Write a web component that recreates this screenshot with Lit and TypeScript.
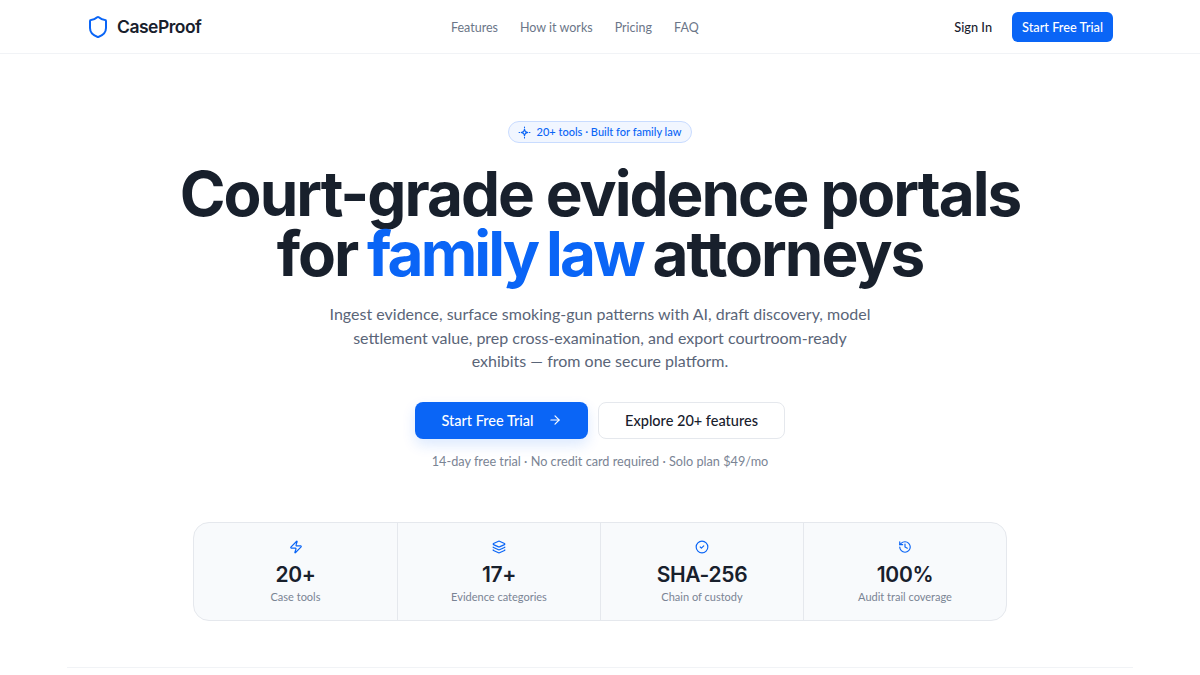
import { LitElement, html, css, svg } from "lit";
import { customElement } from "lit/decorators.js";

const icon = (paths: unknown, cls = "") => html`<svg class=${cls} viewBox="0 0 24 24" fill="none" stroke="currentColor" stroke-width="2" stroke-linecap="round" stroke-linejoin="round">${paths}</svg>`;
const shield = svg`<path d="M20 13c0 5-3.5 7.5-7.66 8.95a1 1 0 0 1-.67-.01C7.5 20.5 4 18 4 13V6a1 1 0 0 1 1-1c2 0 4.5-1.2 6.24-2.72a1.17 1.17 0 0 1 1.52 0C14.51 3.81 17 5 19 5a1 1 0 0 1 1 1z"/>`;
const sparkle = svg`<path d="M12 6l1.6 4.4L18 12l-4.4 1.6L12 18l-1.6-4.4L6 12l4.4-1.6z"/><path d="M12 2v1M12 21v1M2 12h1M21 12h1"/>`;
const arrow = svg`<path d="M5 12h14"/><path d="m12 5 7 7-7 7"/>`;
const zap = svg`<path d="M4 14a1 1 0 0 1-.78-1.63l9.9-10.2a.5.5 0 0 1 .86.46l-1.92 6.02A1 1 0 0 0 13 10h7a1 1 0 0 1 .78 1.63l-9.9 10.2a.5.5 0 0 1-.86-.46l1.92-6.02A1 1 0 0 0 11 14z"/>`;
const layers = svg`<path d="M12.83 2.18a2 2 0 0 0-1.66 0L2.6 6.08a1 1 0 0 0 0 1.83l8.58 3.91a2 2 0 0 0 1.66 0l8.58-3.9a1 1 0 0 0 0-1.83z"/><path d="M2 12a1 1 0 0 0 .58.91l8.6 3.91a2 2 0 0 0 1.65 0l8.58-3.9A1 1 0 0 0 22 12"/><path d="M2 17a1 1 0 0 0 .58.91l8.6 3.91a2 2 0 0 0 1.65 0l8.58-3.9A1 1 0 0 0 22 17"/>`;
const check = svg`<circle cx="12" cy="12" r="10"/><path d="m9 12 2 2 4-4"/>`;
const history = svg`<path d="M3 12a9 9 0 1 0 9-9 9.75 9.75 0 0 0-6.74 2.74L3 8"/><path d="M3 3v5h5"/><path d="M12 7v5l4 2"/>`;

const stats = [
  { i: zap, v: "20+", l: "Case tools" },
  { i: layers, v: "17+", l: "Evidence categories" },
  { i: check, v: "SHA-256", l: "Chain of custody" },
  { i: history, v: "100%", l: "Audit trail coverage" },
];

@customElement("app-root")
export class AppRoot extends LitElement {
  static styles = css`
    :host { display: block; height: 675px; overflow: hidden; background: #fff; color: #1a202c; font-family: "Lato", "Liberation Sans", sans-serif; }
    * { box-sizing: border-box; }
    svg { display: block; }
    header { height: 54px; border-bottom: 1px solid #f1f3f6; display: grid; grid-template-columns: 363px auto 1fr; align-items: center; padding: 0 87px 0 88px; }
    .brand { display: flex; align-items: center; gap: 7px; font-family: "Inter", sans-serif; font-size: 17.5px; font-weight: 600; letter-spacing: -0.5px; color: #18202c; white-space: nowrap; }
    .brand svg { width: 24px; height: 24px; margin: 0 0 0 -2px; color: #0a65f6; }
    nav { display: flex; gap: 22px; padding-top: 2px; font-size: 12.5px; color: #6b7688; }
    .right { justify-self: end; display: flex; align-items: center; gap: 20px; font-size: 12.75px; font-weight: 500; color: #18202c; }
    .cta { background: #0a65f6; color: #fff; height: 30px; border-radius: 6px; padding: 0 10px; display: flex; align-items: center; }
    main { display: flex; flex-direction: column; align-items: center; padding-top: 67px; }
    .badge { height: 22px; display: flex; align-items: center; gap: 6px; padding: 0 10px 0 9px; border-radius: 11px; background: #f1f6ff; border: 1px solid #c9dcff; color: #0a65f6; font-size: 11px; font-weight: 500; }
    .badge span { padding-bottom: 2px; }
    .badge svg { width: 13px; height: 13px; }
    h1 { margin: 21px 0 0; font-family: "Inter", sans-serif; font-size: 62px; line-height: 60px; font-weight: 700; letter-spacing: -2px; text-align: center; color: #18202c; }
    .line2 { word-spacing: -3px; }
    .hl { color: #0a65f6; letter-spacing: -2.9px; }
    .lead { margin: 18px 0 0; width: 548px; font-size: 16px; line-height: 23.5px; text-align: center; color: #5a6578; }
    .actions { display: flex; gap: 10px; margin-top: 29px; }
    .btn { height: 37px; border-radius: 8px; display: flex; align-items: center; justify-content: center; font-size: 14.5px; font-weight: 500; }
    .primary { width: 173px; gap: 14px; background: #0a65f6; color: #fff; box-shadow: 0 6px 14px rgba(10, 101, 246, 0.14); }
    .primary svg { width: 14px; height: 14px; }
    .secondary { width: 187px; background: #fff; border: 1px solid #e5e8ed; color: #18202c; }
    .note { margin-top: 14px; font-size: 12.7px; line-height: 16px; color: #7a8494; }
    .stats { margin-top: 53px; width: 814px; height: 99px; display: grid; grid-template-columns: repeat(4, 1fr); border: 1px solid #e5e8ed; border-radius: 16px; background: #f8fafc; }
    .stat { display: flex; flex-direction: column; align-items: center; padding-top: 17px; border-left: 1px solid #e5e8ed; }
    .stat:first-child { border-left: 0; }
    .stat svg { width: 14px; height: 14px; color: #0a65f6; }
    .val { margin-top: 7px; font-family: "Inter", sans-serif; font-size: 21px; line-height: 28px; font-weight: 600; letter-spacing: -0.3px; color: #18202c; }
    .lab { margin-top: 1px; font-size: 11px; line-height: 14px; color: #7a8494; }
    hr { margin: 46px 0 0; width: 1066px; border: 0; border-top: 1px solid #f1f3f6; }
  `;

  render() {
    return html`
      <header>
        <div class="brand">${icon(shield)}<span>CaseProof</span></div>
        <nav><span>Features</span><span>How it works</span><span>Pricing</span><span>FAQ</span></nav>
        <div class="right"><span>Sign In</span><span class="cta">Start Free Trial</span></div>
      </header>
      <main>
        <div class="badge">${icon(sparkle)}<span>20+ tools · Built for family law</span></div>
        <h1>Court-grade evidence portals<br /><span class="line2">for <span class="hl">family law</span> attorneys</span></h1>
        <p class="lead">Ingest evidence, surface smoking-gun patterns with AI, draft discovery, model settlement value, prep cross-examination, and export courtroom-ready exhibits — from one secure platform.</p>
        <div class="actions">
          <div class="btn primary"><span>Start Free Trial</span>${icon(arrow)}</div>
          <div class="btn secondary">Explore 20+ features</div>
        </div>
        <div class="note">14-day free trial · No credit card required · Solo plan $49/mo</div>
        <section class="stats">
          ${stats.map((s) => html`<div class="stat">${icon(s.i)}<div class="val">${s.v}</div><div class="lab">${s.l}</div></div>`)}
        </section>
        <hr />
      </main>
    `;
  }
}
